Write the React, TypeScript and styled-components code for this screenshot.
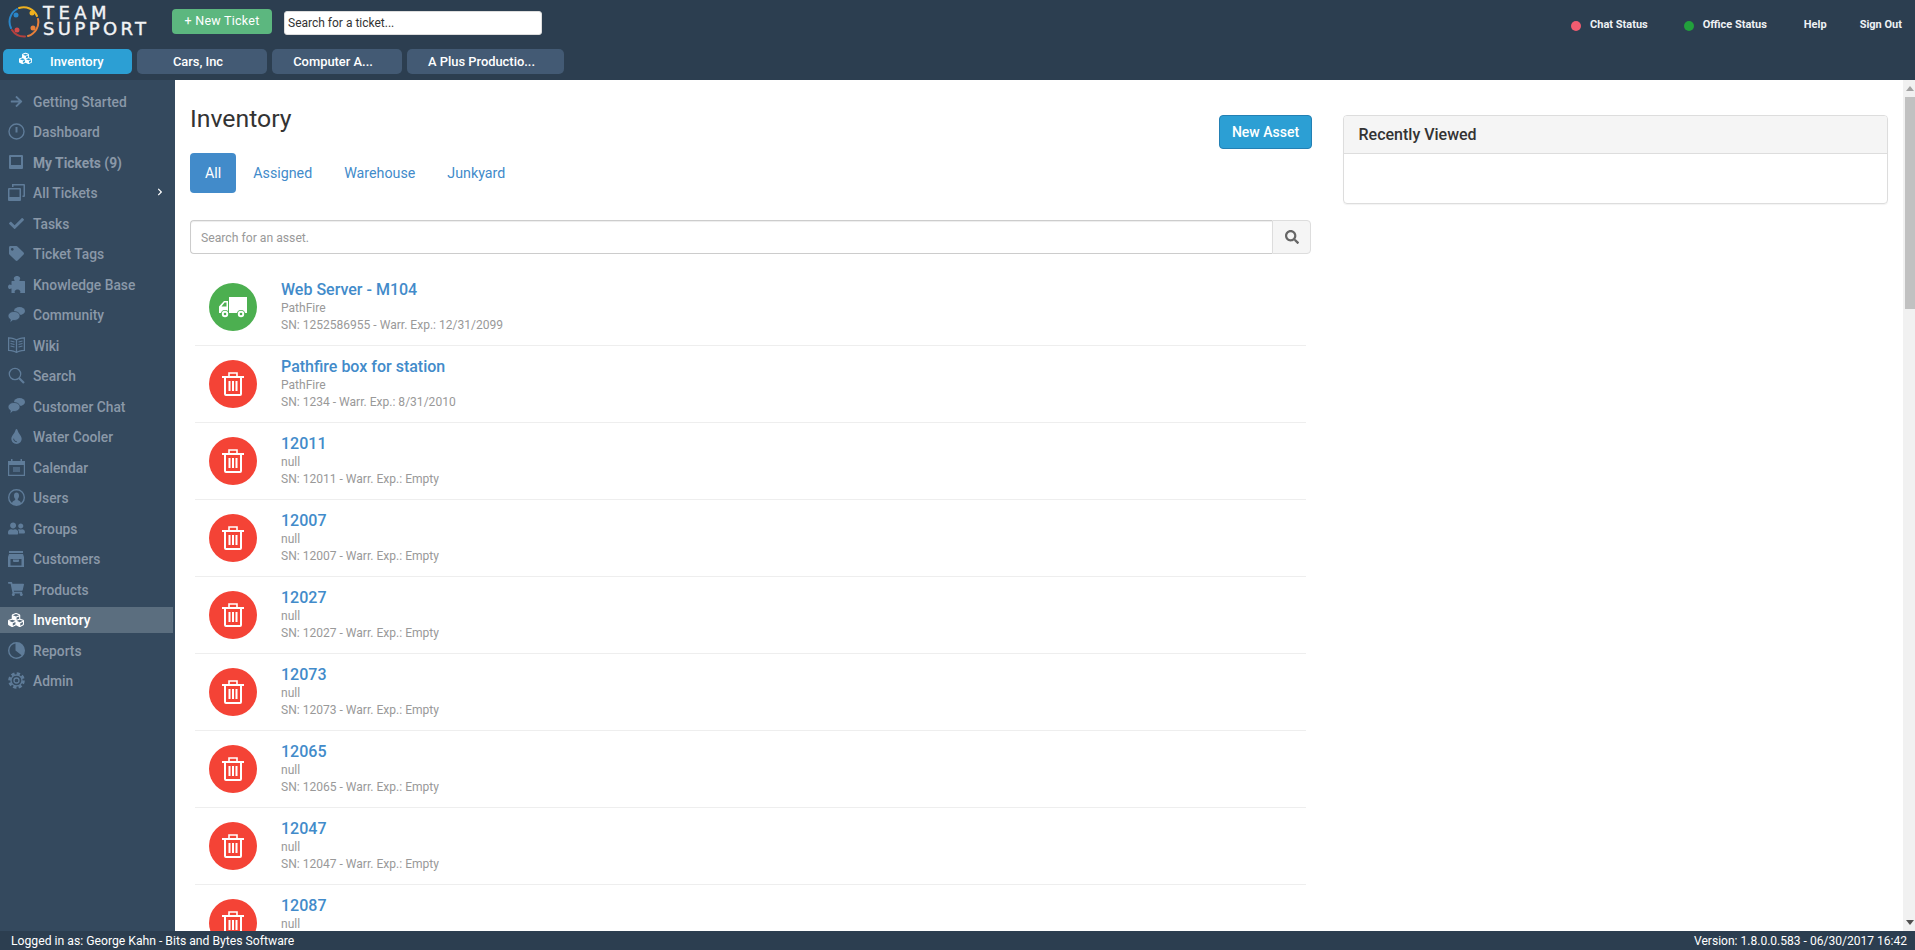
import React from "react";
import styled, { createGlobalStyle } from "styled-components";
import {
  FaArrowRight, FaCheck, FaTag, FaTint, FaShoppingCart,
  FaCubes, FaSearch, FaUserFriends, FaChevronRight,
} from "react-icons/fa";

const Global = createGlobalStyle`
  html, body { margin: 0; padding: 0; height: 100%; overflow: hidden; background: #fff; }
  body { font-family: Roboto, "Liberation Sans", sans-serif; }
  #root { height: 100%; }
  * { box-sizing: border-box; }
`;

const Page = styled.div`
  display: flex; flex-direction: column; width: 1915px; height: 950px;
`;
const Header = styled.header`
  flex: 0 0 80px; background: #2c3e50; display: flex; flex-direction: column;
`;
const TopRow = styled.div`
  flex: 0 0 49px; display: flex; align-items: flex-start;
`;
const LogoWrap = styled.div`
  width: 172px; height: 49px; display: flex; padding: 5px 0 0 8px; gap: 3px;
`;
const LogoText = styled.div`
  display: flex; flex-direction: column; color: #f2f4f6; font-family: "DejaVu Sans", sans-serif;
  font-weight: 400;
`;
const LogoLine = styled.span<{ $w: number }>`
  display: block; font-size: 18px; height: 16px; line-height: 16px; white-space: nowrap;
  letter-spacing: ${(p) => p.$w}px; -webkit-text-stroke: 0.4px #f2f4f6;
`;
const NewTicket = styled.button`
  margin-top: 9px; width: 100px; height: 25px; border: 0; border-radius: 4px; background: #5cb77f;
  color: #fff; font: 400 12.5px Roboto, sans-serif; letter-spacing: 0.25px; padding: 0 0 2px;
`;
const TicketSearch = styled.input`
  margin: 11px 0 0 12px; width: 258px; height: 24px; border: 1px solid #ddd; border-radius: 3px; background: #fff;
  padding: 0 3px; font: 400 12px Roboto, sans-serif; outline: none;
  &::placeholder { color: #333; opacity: 1; }
`;
const StatusBar = styled.nav`
  margin-left: auto; display: flex; align-items: center; height: 20px; margin-top: 14px; padding-right: 13px;
  color: #eef1f4; font: 700 11px Roboto, sans-serif;
`;
const Dot = styled.i<{ $c: string }>`
  width: 10px; height: 10px; border-radius: 50%; background: ${(p) => p.$c}; margin: 3px 9px 0 0;
`;
const StatusLink = styled.span<{ $gap: number }>`
  margin-right: ${(p) => p.$gap}px; white-space: nowrap;
`;
const Tabs = styled.div`
  display: flex; gap: 5px; padding-left: 3px; height: 25px;
`;
const Tab = styled.div<{ $active?: boolean; $w: number }>`
  width: ${(p) => p.$w}px; height: 25px; border-radius: 5px; background: ${(p) => (p.$active ? "#2c9fd4" : "#435a74")};
  color: #fff; font: 500 12.9px Roboto, sans-serif; display: flex; align-items: center;
  justify-content: ${(p) => (p.$active ? "flex-start" : "center")};
  padding: ${(p) => (p.$active ? "0 0 1px 16px" : "0 8px 1px 0")}; gap: 18px;
  & svg { margin-top: -5px; }
`;

const Middle = styled.div`
  flex: 1; min-height: 0; display: flex;
`;
const Sidebar = styled.aside`
  flex: 0 0 175px; background: #34495e; padding-top: 8px; display: flex; flex-direction: column; gap: 4.53px;
`;
const NavItem = styled.div<{ $active?: boolean; $strong?: boolean }>`
  height: 26px; width: 173px; display: flex; align-items: center; gap: 8px; padding: 1px 0 0 7px;
  background: ${(p) => (p.$active ? "#5b6e7f" : "transparent")};
  color: ${(p) => (p.$active ? "#fff" : "#8a98a8")};
  font: ${(p) => (p.$strong ? 700 : 500)} 13.8px Roboto, sans-serif;
`;
const NavIcon = styled.span<{ $active?: boolean }>`
  width: 18px; height: 18px; display: flex; align-items: center; justify-content: center; margin-top: -1px;
  color: ${(p) => (p.$active ? "#fff" : "#5f7c99")};
`;
const Chevron = styled.span`
  margin-left: auto; margin-right: 9px; color: #fff; display: flex; margin-top: -3px;
`;

const Main = styled.main`
  flex: 1; min-width: 0; overflow: hidden; display: flex; gap: 30.5px; padding-left: 15px; background: #fff;
`;
const LeftCol = styled.section`
  flex: 0 0 1122px;
`;
const TitleRow = styled.div`
  display: flex; justify-content: space-between; align-items: flex-start; height: 73px; padding-top: 24px;
`;
const Title = styled.h1`
  margin: 0; font: 400 24.8px/30px Roboto, sans-serif; color: #333;
`;
const NewAsset = styled.button`
  margin: 11px 0 0; width: 93px; height: 34px; border: 1px solid #2380b4; border-radius: 4px; background: #2c9fd4;
  color: #fff; font: 500 14px Roboto, sans-serif; padding: 0;
`;
const Pills = styled.div`
  display: flex; gap: 2px; height: 40px;
`;
const Pill = styled.a<{ $active?: boolean }>`
  display: flex; align-items: center; padding: 0 15px; border-radius: 4px; font: 400 14.25px Roboto, sans-serif;
  background: ${(p) => (p.$active ? "#428bca" : "transparent")}; color: ${(p) => (p.$active ? "#fff" : "#428bca")};
`;
const SearchGroup = styled.div`
  display: flex; height: 34px; margin: 27px 1px 0 0;
`;
const SearchInput = styled.input`
  flex: 1; border: 1px solid #ccc; border-right: 0; border-radius: 4px 0 0 4px; padding: 2px 10px 0;
  font: 400 12.2px Roboto, sans-serif; box-shadow: inset 0 1px 1px rgba(0,0,0,.075); outline: none;
  &::placeholder { color: #999; opacity: 1; }
`;
const SearchBtn = styled.button`
  width: 39px; border: 1px solid #ddd; border-radius: 0 4px 4px 0; background: #f5f5f5; color: #666;
  display: flex; align-items: center; justify-content: center; padding: 0;
`;
const List = styled.div`
  margin: 15px 6px 0 5px;
`;
const Row = styled.article`
  height: 77px; padding: 14px; display: flex; gap: 24px; align-items: center; border-bottom: 1px solid #eee;
`;
const Badge = styled.div<{ $c: string }>`
  flex: 0 0 48px; height: 48px; border-radius: 50%; background: ${(p) => p.$c}; color: #fff;
  display: flex; align-items: center; justify-content: center;
`;
const RowText = styled.div`
  display: flex; flex-direction: column;
`;
const RowTitle = styled.a`
  font: 500 16px/20px Roboto, sans-serif; color: #428bca;
`;
const RowLine = styled.span`
  font: 400 12.05px/17px Roboto, sans-serif; color: #999;
`;
const RightCol = styled.aside`
  flex: 0 0 545px; padding-top: 35px;
`;
const Panel = styled.div`
  height: 89px; border: 1px solid #ddd; border-radius: 4px; box-shadow: 0 1px 1px rgba(0,0,0,.05);
`;
const PanelHead = styled.div`
  height: 38px; background: #f5f5f5; border-bottom: 1px solid #ddd; border-radius: 3px 3px 0 0;
  padding: 0 15px; display: flex; align-items: center; font: 500 16px Roboto, sans-serif; color: #333;
`;
const Scroll = styled.div`
  flex: 0 0 12px; background: #f1f1f1; position: relative; padding: 17px 0 0 2px;
`;
const Thumb = styled.div`
  width: 10px; height: 212px; background: #c1c1c1;
`;
const Arrow = styled.i<{ $down?: boolean }>`
  position: absolute; left: 3px; width: 0; height: 0; border-left: 4px solid transparent; border-right: 4px solid transparent;
  ${(p) => (p.$down ? "bottom: 6px; border-top: 5px solid #505050;" : "top: 6px; border-bottom: 5px solid #a3a3a3;")}
`;
const Footer = styled.footer`
  flex: 0 0 19px; background: #2c3e50; color: #fff; display: flex; justify-content: space-between; align-items: center;
  padding: 0 8px 0 11px; font: 400 12.2px Roboto, sans-serif;
`;
const VersionNote = styled.span`
  font-size: 12.05px;
`;

const IDash = () => (
  <svg width="17" height="17" viewBox="0 0 17 17" fill="none" stroke="currentColor">
    <circle cx="8.5" cy="8.5" r="7.5" strokeWidth="1.4" />
    <path d="M8.5 4v5.5" strokeWidth="2" />
  </svg>
);
const IMy = () => (
  <svg width="14" height="14" viewBox="0 0 14 14" fill="currentColor">
    <path fillRule="evenodd" d="M1 0h12a1 1 0 0 1 1 1v12a1 1 0 0 1-1 1H1a1 1 0 0 1-1-1V1a1 1 0 0 1 1-1zm1 2v8h10V2z" />
  </svg>
);
const IAll = () => (
  <svg width="17" height="17" viewBox="0 0 17 17" fill="currentColor">
    <path fillRule="evenodd" d="M1 4h11a1 1 0 0 1 1 1v11a1 1 0 0 1-1 1H1a1 1 0 0 1-1-1V5a1 1 0 0 1 1-1zm.5 1.500v7.500h10V5.500z" />
    <path d="M4 0h12a1 1 0 0 1 1 1v11a1 1 0 0 1-1 1h-1.500v-1.500H15.500v-10H5.500V3H4z" />
  </svg>
);
const IPuzzle = () => (
  <svg width="17" height="17" viewBox="0 0 17 17" fill="currentColor">
    <path d="M6.500 5V4C5.800 3.300 5.700 2.600 5.900 2 6.300.6 8 0 9 0s2.700.6 3.100 2c.2.600.1 1.300-.6 2v1H16.500a.5.500 0 0 1 .5.500V17h-5c.4-.6.500-1.200.3-1.800C11.900 14 10.500 13.400 9.500 13.400S7.100 14 6.700 15.200c-.2.600-.1 1.200.3 1.800H3.500V12.500H2.800C2.300 13 1.700 13.100 1.200 12.900.4 12.500 0 11.500 0 10.800S.4 9 1.200 8.700C1.700 8.500 2.300 8.600 2.800 9h.7V5.500A.5.500 0 0 1 4 5z" />
  </svg>
);
const IChat = () => (
  <svg width="17" height="16" viewBox="0 0 17 16" fill="currentColor">
    <ellipse cx="11.500" cy="4" rx="5.500" ry="4" />
    <path fillRule="evenodd" d="M6 4.500c3.300 0 6 2 6 4.500s-2.700 4.500-6 4.500c-.4 0-.8 0-1.200-.1L2 16l.3-3.500C.9 11.600 0 10.400 0 9c0-2.500 2.700-4.500 6-4.500z" stroke="#34495e" strokeWidth=".8" />
  </svg>
);
const IWiki = () => (
  <svg width="17" height="16" viewBox="0 0 17 16" fill="none" stroke="currentColor" strokeWidth="1.100">
    <path d="M8.500 3C6.500 1.500 3 1 .6 .8v12.500c2.500.2 6 .7 7.900 2.200 1.900-1.500 5.400-2 7.900-2.200V.8C14 1 10.500 1.500 8.500 3zM8.500 3v12.500" strokeWidth="1.300" />
    <path d="M2.500 4l4 1M2.500 6.500l4 1M2.500 9l4 1M14.500 4l-4 1M14.500 6.500l-4 1M14.500 9l-4 1" />
  </svg>
);
const ILens = () => (
  <svg width="17" height="17" viewBox="0 0 17 17" fill="none" stroke="currentColor">
    <circle cx="7" cy="7" r="5.700" strokeWidth="1.300" />
    <path d="M11 11l5 5" strokeWidth="2.200" />
  </svg>
);
const ICal = () => (
  <svg width="17" height="17" viewBox="0 0 17 17" fill="currentColor">
    <path fillRule="evenodd" d="M0 2h3V0h1.500v2h8V0H14v2h3v15H0zm1.200 4v9.800h14.600V6z" />
    <rect x="5" y="8" width="7" height="5" opacity=".6" />
  </svg>
);
const IUser = () => (
  <svg width="17" height="17" viewBox="0 0 17 17" fill="currentColor">
    <path fillRule="evenodd" d="M8.500 0a8.500 8.500 0 1 1 0 17 8.500 8.500 0 0 1 0-17zm0 1.500a7 7 0 0 0-4.500 12.400c.6-1.800 2-2.400 3.200-2.900V9.800C6.300 9 6 7.800 6 6.500 6 4.800 7 3.500 8.500 3.500S11 4.800 11 6.500c0 1.300-.3 2.500-1.200 3.300V11c1.200.5 2.600 1.100 3.200 2.900A7 7 0 0 0 8.500 1.500z" />
  </svg>
);
const IStore = () => (
  <svg width="16" height="16" viewBox="0 0 16 16" fill="currentColor">
    <rect x="1" y="0" width="14" height="2" />
    <path fillRule="evenodd" d="M1 3h14l1 3v10H0V6zm1.500 5v6.500h11V8z" />
    <path d="M5 8.500h6v1.500a1 1 0 0 1-1 1H6a1 1 0 0 1-1-1z" />
  </svg>
);
const IPie = () => (
  <svg width="17" height="17" viewBox="0 0 17 17" fill="currentColor">
    <path fillRule="evenodd" d="M8.500 0a8.500 8.500 0 1 1 0 17 8.500 8.500 0 0 1 0-17zm-1 1.600A7 7 0 1 0 13.600 13.300L7.500 8.500z" />
  </svg>
);
const IGear = () => (
  <svg width="17" height="17" viewBox="0 0 17 17" fill="none" stroke="currentColor">
    <circle cx="8.500" cy="8.500" r="7" strokeWidth="2.600" strokeDasharray="3.300 2.200" />
    <circle cx="8.500" cy="8.500" r="5.500" strokeWidth="1.300" />
    <circle cx="8.500" cy="8.500" r="2.500" strokeWidth="1.300" />
  </svg>
);
const ICube = ({ size }: { size: number }) => <FaCubes size={size} />;

const Truck = () => (
  <svg width="28" height="21" viewBox="0 0 28 21" fill="#fff">
    <path d="M10 0h18v16H10z" />
    <path fillRule="evenodd" d="M5 4h4v12H0V9.500zM5.600 5.500L2.500 9.500H7.500v-4z" />
    <circle cx="6" cy="17" r="4" fill="#4caf50" />
    <circle cx="22" cy="17" r="4" fill="#4caf50" />
    <circle cx="6" cy="17" r="3.200" />
    <circle cx="22" cy="17" r="3.200" />
    <circle cx="6" cy="17" r="1.300" fill="#4caf50" />
    <circle cx="22" cy="17" r="1.300" fill="#4caf50" />
  </svg>
);
const Trash = () => (
  <svg width="22" height="24" viewBox="0 0 22 24" fill="none" stroke="#fff">
    <path d="M0 5h22" strokeWidth="2" />
    <path d="M7 5V1h8v4" strokeWidth="1.600" />
    <path d="M3 5v17a1 1 0 0 0 1 1h14a1 1 0 0 0 1-1V5" strokeWidth="2" />
    <path d="M7.500 9v10M11 9v10M14.500 9v10" strokeWidth="2" />
  </svg>
);

const Logo = () => (
  <svg width="32" height="33" viewBox="0 0 32 33" fill="none" strokeWidth="2" strokeLinecap="round">
    <path d="M3 23A14.500 14.500 0 0 1 9 4" stroke="#2a86c9" />
    <path d="M11 3A14.500 14.500 0 0 1 29 11" stroke="#eeb01f" />
    <path d="M30 14A14.500 14.500 0 0 1 20 31" stroke="#e9803a" />
    <path d="M17 31.500A14.500 14.500 0 0 1 4 25" stroke="#b4413e" />
    <circle cx="24" cy="8" r="2.500" fill="#eeb01f" />
    <circle cx="8" cy="10" r="2.500" fill="#2a86c9" />
    <circle cx="25" cy="23" r="2.500" fill="#e9803a" />
    <circle cx="9" cy="25" r="2.500" fill="#d44a4a" />
  </svg>
);

const nav: { label: string; icon: React.ReactNode; strong?: boolean; chevron?: boolean }[] = [
  { label: "Getting Started", icon: <FaArrowRight size={13} /> },
  { label: "Dashboard", icon: <IDash /> },
  { label: "My Tickets (9)", icon: <IMy />, strong: true },
  { label: "All Tickets", icon: <IAll />, chevron: true },
  { label: "Tasks", icon: <FaCheck size={15} /> },
  { label: "Ticket Tags", icon: <FaTag size={15} /> },
  { label: "Knowledge Base", icon: <IPuzzle /> },
  { label: "Community", icon: <IChat /> },
  { label: "Wiki", icon: <IWiki /> },
  { label: "Search", icon: <ILens /> },
  { label: "Customer Chat", icon: <IChat /> },
  { label: "Water Cooler", icon: <FaTint size={15} /> },
  { label: "Calendar", icon: <ICal /> },
  { label: "Users", icon: <IUser /> },
  { label: "Groups", icon: <FaUserFriends size={17} /> },
  { label: "Customers", icon: <IStore /> },
  { label: "Products", icon: <FaShoppingCart size={16} /> },
  { label: "Inventory", icon: <ICube size={16} /> },
  { label: "Reports", icon: <IPie /> },
  { label: "Admin", icon: <IGear /> },
];

const rows = [
  { t: "Web Server - M104", s: "PathFire", m: "SN: 1252586955 - Warr. Exp.: 12/31/2099", ok: true },
  { t: "Pathfire box for station", s: "PathFire", m: "SN: 1234 - Warr. Exp.: 8/31/2010" },
  ...["12011", "12007", "12027", "12073", "12065", "12047", "12087"].map((n) => ({
    t: n, s: "null", m: `SN: ${n} - Warr. Exp.: Empty`,
  })),
] as { t: string; s: string; m: string; ok?: boolean }[];

export default function App() {
  return (
    <Page>
      <Global />
      <Header>
        <TopRow>
          <LogoWrap>
            <Logo />
            <LogoText>
              <LogoLine $w={4.4}>TEAM</LogoLine>
              <LogoLine $w={3.4}>SUPPORT</LogoLine>
            </LogoText>
          </LogoWrap>
          <NewTicket>+ New Ticket</NewTicket>
          <TicketSearch placeholder="Search for a ticket..." />
          <StatusBar>
            <Dot $c="#f25c70" />
            <StatusLink $gap={36}>Chat Status</StatusLink>
            <Dot $c="#22a03c" />
            <StatusLink $gap={37}>Office Status</StatusLink>
            <StatusLink $gap={33}>Help</StatusLink>
            <StatusLink $gap={0}>Sign Out</StatusLink>
          </StatusBar>
        </TopRow>
        <Tabs>
          <Tab $active $w={129}><ICube size={13} />Inventory</Tab>
          <Tab $w={130}>Cars, Inc</Tab>
          <Tab $w={130}>Computer A...</Tab>
          <Tab $w={157}>A Plus Productio...</Tab>
        </Tabs>
      </Header>
      <Middle>
        <Sidebar>
          {nav.map((n) => {
            const active = n.label === "Inventory";
            return (
              <NavItem key={n.label} $active={active} $strong={n.strong}>
                <NavIcon $active={active}>{n.icon}</NavIcon>
                {n.label}
                {n.chevron && <Chevron><FaChevronRight size={8} /></Chevron>}
              </NavItem>
            );
          })}
        </Sidebar>
        <Main>
          <LeftCol>
            <TitleRow>
              <Title>Inventory</Title>
              <NewAsset>New Asset</NewAsset>
            </TitleRow>
            <Pills>
              <Pill $active>All</Pill>
              <Pill>Assigned</Pill>
              <Pill>Warehouse</Pill>
              <Pill>Junkyard</Pill>
            </Pills>
            <SearchGroup>
              <SearchInput placeholder="Search for an asset." />
              <SearchBtn><FaSearch size={14} /></SearchBtn>
            </SearchGroup>
            <List>
              {rows.map((r) => (
                <Row key={r.t}>
                  <Badge $c={r.ok ? "#4caf50" : "#f44336"}>{r.ok ? <Truck /> : <Trash />}</Badge>
                  <RowText>
                    <RowTitle>{r.t}</RowTitle>
                    <RowLine>{r.s}</RowLine>
                    <RowLine>{r.m}</RowLine>
                  </RowText>
                </Row>
              ))}
            </List>
          </LeftCol>
          <RightCol>
            <Panel><PanelHead>Recently Viewed</PanelHead></Panel>
          </RightCol>
        </Main>
        <Scroll>
          <Arrow />
          <Thumb />
          <Arrow $down />
        </Scroll>
      </Middle>
      <Footer>
        <span>Logged in as: George Kahn - Bits and Bytes Software</span>
        <VersionNote>Version: 1.8.0.0.583 - 06/30/2017 16:42</VersionNote>
      </Footer>
    </Page>
  );
}
